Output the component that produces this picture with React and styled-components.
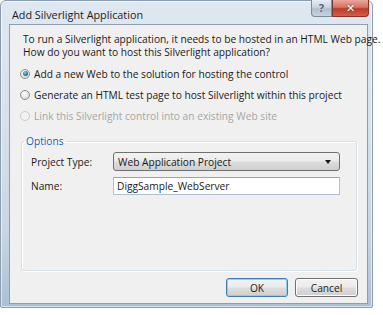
import React from "react";
import styled, { createGlobalStyle } from "styled-components";

const Global = createGlobalStyle`
  html, body { margin: 0; padding: 0; background: #ffffff; }
  body { font-family: "Open Sans", "Noto Sans", sans-serif; }
`;

const Window = styled.div`
  width: 373px;
  height: 308px;
  box-sizing: border-box;
  border: 1px solid #8a9cad;
  border-radius: 6px 6px 2px 2px;
  background: linear-gradient(180deg, #dfe8f0 0%, #d6e1ea 40%, #c9d6e2 75%, #a9c0d6 100%);
  display: flex;
  flex-direction: column;
  box-shadow: inset 0 0 0 1px rgba(255,255,255,0.6);
`;

const TitleBar = styled.div`
  height: 23px;
  display: flex;
  align-items: flex-start;
  padding-left: 11px;
`;

const Title = styled.div`
  font-size: 10.8px;
  color: #1b1b1b;
  line-height: 27px;
  flex: 1;
`;

const CaptionButtons = styled.div`
  display: flex;
  margin-right: 3px;
  margin-top: -1px;
`;

const CaptionButton = styled.div`
  width: ${p => p.$w}px;
  height: 17px;
  box-sizing: border-box;
  border: 1px solid ${p => (p.$close ? "#7a3a33" : "#7d8a98")};
  border-top: none;
  border-radius: ${p => (p.$close ? "0 0 4px 0" : "0 0 0 4px")};
  background: ${p =>
    p.$close
      ? "linear-gradient(180deg, #e8a89c 0%, #d9735f 45%, #c0392a 55%, #d0604a 100%)"
      : "linear-gradient(180deg, #e6ecf2 0%, #c9d4de 45%, #b0bfcd 55%, #c6d3df 100%)"};
  display: flex;
  align-items: center;
  justify-content: center;
  color: ${p => (p.$close ? "#ffffff" : "#5d6b78")};
  font-family: "DejaVu Sans", sans-serif;
  font-weight: bold;
  font-size: 11px;
  text-shadow: ${p => (p.$close ? "0 0 2px #7a2a20" : "0 0 1px #ffffff")};
`;

const Content = styled.div`
  flex: 1;
  margin: 0 4px 3px 8px;
  background: #f0f0f0;
  border: 1px solid #8d9eae;
  box-sizing: border-box;
  padding: 8px 0 6px 13px;
  display: flex;
  flex-direction: column;
  font-size: 10.2px;
  letter-spacing: 0;
  color: #1a1a1a;
  white-space: nowrap;
`;

const Intro = styled.p`
  margin: 0;
  line-height: 13px;
`;

const RadioList = styled.div`
  display: flex;
  flex-direction: column;
  margin-top: 4px;
  margin-left: -3px;
`;

const RadioRow = styled.label`
  display: flex;
  align-items: center;
  height: 21px;
  gap: 4px;
  color: ${p => (p.$disabled ? "#a6a6a6" : "#1a1a1a")};
`;

const RadioCircle = styled.span`
  width: 10px;
  height: 10px;
  border-radius: 50%;
  box-sizing: border-box;
  border: 1px solid ${p => (p.$disabled ? "#c9c9c9" : "#8e8f8f")};
  background: ${p =>
    p.$disabled
      ? "#f2f2f2"
      : "radial-gradient(circle at 40% 35%, #ffffff 0%, #e6e6e6 50%, #cfcfcf 100%)"};
  display: flex;
  align-items: center;
  justify-content: center;
  flex-shrink: 0;
  &::after {
    content: "";
    display: ${p => (p.$checked ? "block" : "none")};
    width: 5px;
    height: 5px;
    border-radius: 50%;
    background: radial-gradient(circle at 40% 35%, #8fd0f0 0%, #1d6fa8 60%, #0d4d80 100%);
  }
`;

const Group = styled.fieldset`
  margin: 8px 10px 0 -2px;
  border: 1px solid #d5dfe5;
  box-shadow: inset 1px 1px 0 #ffffff, 1px 1px 0 #ffffff;
  border-radius: 3px;
  padding: 4px 16px 0 9px;
  flex: 1;
  display: flex;
  flex-direction: column;
  gap: 5px;
  min-height: 0;
`;

const Legend = styled.legend`
  color: #1e5fb4;
  padding: 0 2px;
  margin-left: -7px;
`;

const FieldRow = styled.div`
  display: flex;
  align-items: center;
  height: 19px;
`;

const FieldLabel = styled.span`
  width: 82px;
  flex-shrink: 0;
`;

const Select = styled.div`
  flex: 1;
  height: 19px;
  box-sizing: border-box;
  border: 1px solid #707070;
  border-radius: 3px;
  background: linear-gradient(180deg, #f2f2f2 0%, #ebebeb 49%, #dddddd 51%, #cfcfcf 100%);
  display: flex;
  align-items: center;
  padding: 0 8px 0 4px;
`;

const SelectText = styled.span`
  flex: 1;
`;

const Arrow = styled.span`
  width: 0;
  height: 0;
  border-left: 3.5px solid transparent;
  border-right: 3.5px solid transparent;
  border-top: 4px solid #1a1a1a;
`;

const TextBox = styled.div`
  flex: 1;
  height: 18px;
  box-sizing: border-box;
  border: 1px solid #abc1d6;
  border-top-color: #8fa7bf;
  background: #ffffff;
  display: flex;
  align-items: center;
  padding-left: 3px;
`;

const ButtonRow = styled.div`
  display: flex;
  justify-content: flex-end;
  gap: 7px;
  margin-top: 7px;
  margin-right: 9px;
`;

const Button = styled.button`
  width: ${p => (p.$default ? 62 : 63)}px;
  height: 19px;
  box-sizing: border-box;
  border: 1px solid ${p => (p.$default ? "#3c7fb1" : "#707070")};
  border-radius: 3px;
  background: linear-gradient(180deg, #f2f2f2 0%, #ebebeb 49%, #dddddd 51%, #cfcfcf 100%);
  box-shadow: ${p => (p.$default ? "inset 0 0 0 1px #8fd0f2" : "inset 0 0 0 1px #fcfcfc")};
  font-family: inherit;
  font-size: 10.2px;
  color: #1a1a1a;
  padding: 0;
`;

export default function App() {
  return (
    <>
      <Global />
      <Window>
        <TitleBar>
          <Title>Add Silverlight Application</Title>
          <CaptionButtons>
            <CaptionButton $w={21}>?</CaptionButton>
            <CaptionButton $w={37} $close>✕</CaptionButton>
          </CaptionButtons>
        </TitleBar>
        <Content>
          <Intro>
            To run a Silverlight application, it needs to be hosted in an HTML Web page.
            <br />
            How do you want to host this Silverlight application?
          </Intro>
          <RadioList>
            <RadioRow>
              <RadioCircle $checked />
              Add a new Web to the solution for hosting the control
            </RadioRow>
            <RadioRow>
              <RadioCircle />
              Generate an HTML test page to host Silverlight within this project
            </RadioRow>
            <RadioRow $disabled>
              <RadioCircle $disabled />
              Link this Silverlight control into an existing Web site
            </RadioRow>
          </RadioList>
          <Group>
            <Legend>Options</Legend>
            <FieldRow>
              <FieldLabel>Project Type:</FieldLabel>
              <Select>
                <SelectText>Web Application Project</SelectText>
                <Arrow />
              </Select>
            </FieldRow>
            <FieldRow>
              <FieldLabel>Name:</FieldLabel>
              <TextBox>DiggSample_WebServer</TextBox>
            </FieldRow>
          </Group>
          <ButtonRow>
            <Button $default>OK</Button>
            <Button>Cancel</Button>
          </ButtonRow>
        </Content>
      </Window>
    </>
  );
}
